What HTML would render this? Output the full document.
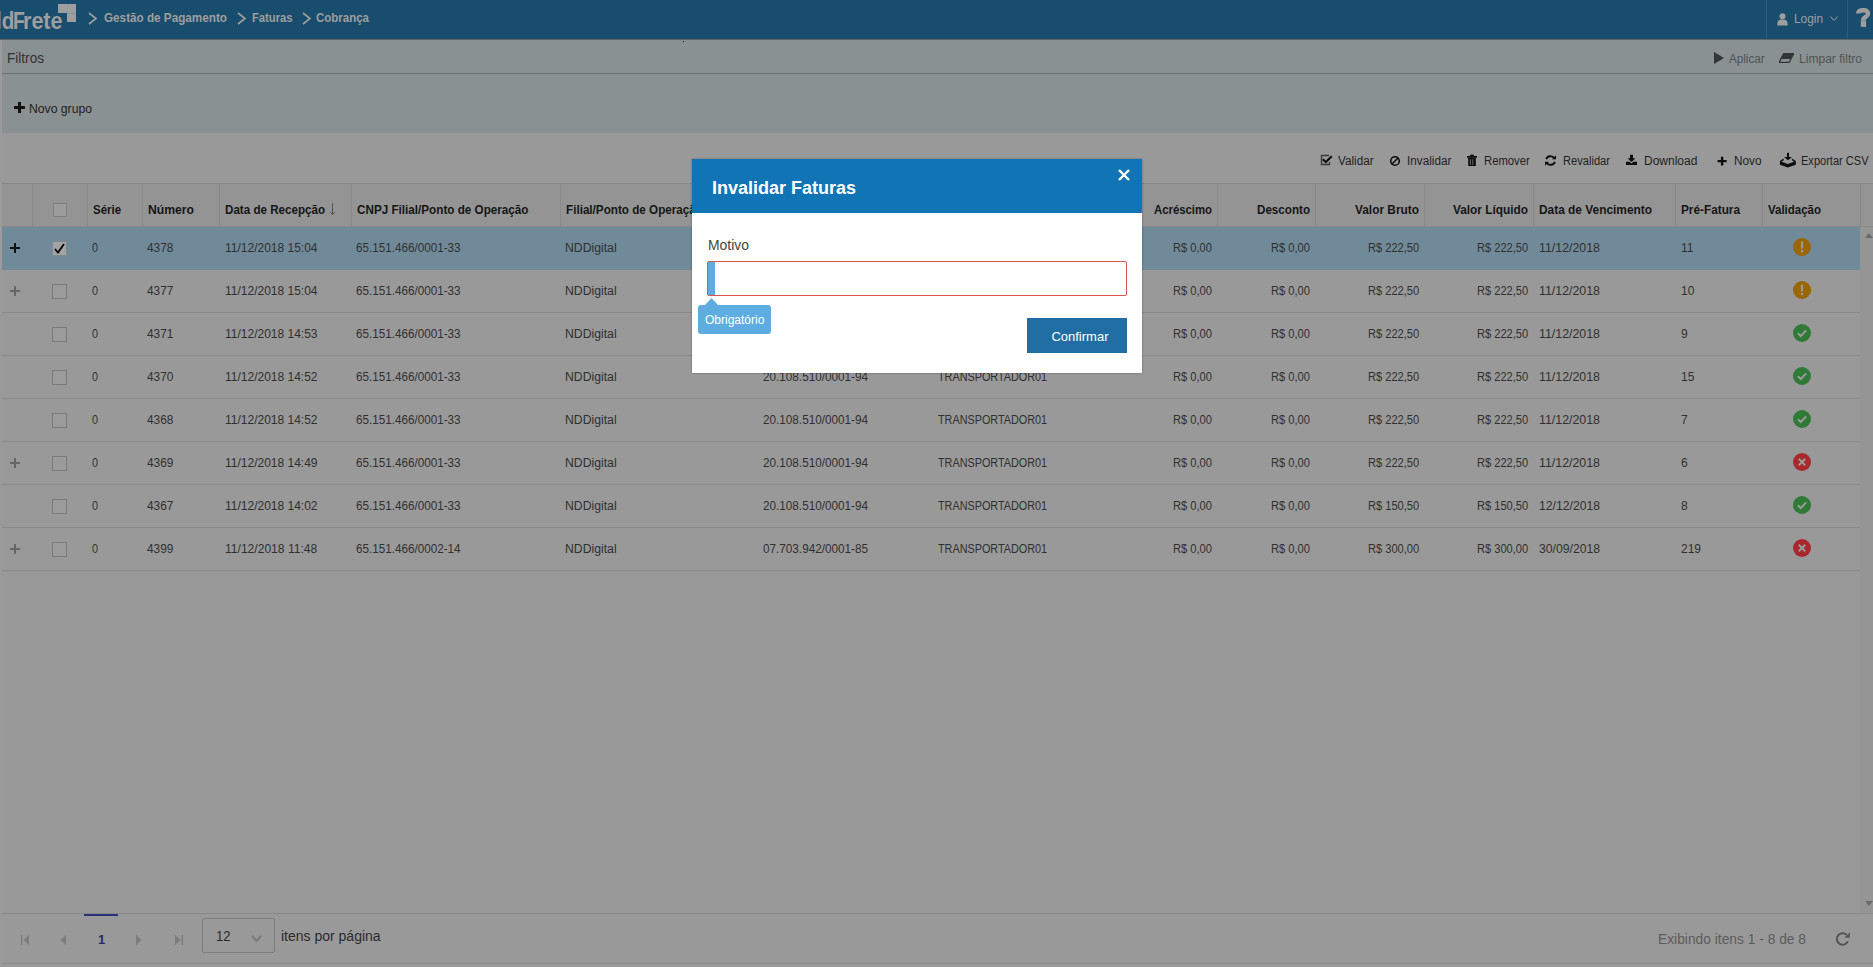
<!DOCTYPE html>
<html><head><meta charset="utf-8"><title>Invalidar Faturas</title>
<style>
html,body{margin:0;padding:0;}
body{width:1873px;height:967px;overflow:hidden;position:relative;background:#999999;font-family:"Liberation Sans", sans-serif;}
.r{position:absolute;}
.t{position:absolute;white-space:nowrap;transform-origin:0 50%;}
</style></head><body>
<div class="r" style="left:0px;top:39px;width:2px;height:928px;background:#9b9b9b;"></div>
<div class="r" style="left:0px;top:0px;width:1873px;height:39px;background:#194d6e;"></div>
<div class="r" style="left:0px;top:39px;width:1873px;height:1px;background:#5f6566;"></div>
<span class="t" style="left:-4.30px;top:5.03px;font-size:23px;line-height:32px;color:#9e9e9e;font-weight:bold;transform:scaleX(0.9002);">ld</span>
<span class="t" style="left:13.30px;top:5.03px;font-size:23px;line-height:32px;color:#9e9e9e;font-weight:bold;transform:scaleX(0.8399);">F</span>
<span class="t" style="left:23.20px;top:5.03px;font-size:23px;line-height:32px;color:#9e9e9e;font-weight:bold;transform:scaleX(0.9362);">rete</span>
<div class="r" style="left:58px;top:4px;width:18px;height:8.5px;background:#9e9e9e;"></div>
<div class="r" style="left:67px;top:4px;width:9px;height:18px;background:#9e9e9e;"></div>
<div class="r" style="left:67px;top:4px;width:1px;height:8.5px;background:#939a9d;"></div>
<div class="r" style="left:67px;top:12.5px;width:9px;height:1px;background:#88969d;"></div>
<svg class="r" style="left:88px;top:12px" width="9" height="13" viewBox="0 0 9 13"><polyline points="1,1 8,6.5 1,12" fill="none" stroke="#9e9e9e" stroke-width="1.6"/></svg>
<span class="t" style="left:104.00px;top:10.34px;font-size:12px;line-height:17px;color:#9e9e9e;font-weight:bold;transform:scaleX(0.9759);">Gestão de Pagamento</span>
<svg class="r" style="left:237px;top:12px" width="9" height="13" viewBox="0 0 9 13"><polyline points="1,1 8,6.5 1,12" fill="none" stroke="#9e9e9e" stroke-width="1.6"/></svg>
<span class="t" style="left:252.00px;top:10.34px;font-size:12px;line-height:17px;color:#9e9e9e;font-weight:bold;transform:scaleX(0.9343);">Faturas</span>
<svg class="r" style="left:302px;top:12px" width="9" height="13" viewBox="0 0 9 13"><polyline points="1,1 8,6.5 1,12" fill="none" stroke="#9e9e9e" stroke-width="1.6"/></svg>
<span class="t" style="left:316.00px;top:10.34px;font-size:12px;line-height:17px;color:#9e9e9e;font-weight:bold;transform:scaleX(0.9576);">Cobrança</span>
<div class="r" style="left:1766px;top:0px;width:1px;height:39px;background:#2c5c7b;"></div>
<div class="r" style="left:1847px;top:0px;width:1px;height:39px;background:#2c5c7b;"></div>
<svg class="r" style="left:1777px;top:13px" width="11" height="13" viewBox="0 0 11 13"><circle cx="5.5" cy="3.2" r="3" fill="#9e9e9e"/><path d="M0.3 12.5 C0.3 7 2 6.5 5.5 6.5 C9 6.5 10.7 7 10.7 12.5 Z" fill="#9e9e9e"/></svg>
<span class="t" style="left:1794.00px;top:11.34px;font-size:12px;line-height:17px;color:#9e9e9e;transform:scaleX(0.9877);">Login</span>
<svg class="r" style="left:1830px;top:16px" width="8" height="6" viewBox="0 0 8 6"><polyline points="0.5,0.5 4,4.5 7.5,0.5" fill="none" stroke="#9e9e9e" stroke-width="1"/></svg>
<svg class="r" style="left:1853px;top:5px" width="20" height="24" viewBox="0 0 20 24"><path d="M5.2 8.6 C5.2 6 7.6 5.3 10.2 5.3 C13 5.3 15 6.4 15 8.7 C15 11.2 12.2 11.6 10.45 13.9 L10.45 15.6" fill="none" stroke="#9e9e9e" stroke-width="4.4"/><rect x="7.8" y="15.3" width="5.3" height="6.6" fill="#9e9e9e"/><rect x="7.8" y="16.2" width="5.3" height="0.8" fill="#8b9598"/></svg>
<div class="r" style="left:2px;top:40px;width:1871px;height:93px;background:#8a9192;"></div>
<div class="r" style="left:683px;top:41px;width:1px;height:1px;background:#111;"></div>
<div class="r" style="left:2px;top:73px;width:1871px;height:1px;background:#6b7172;"></div>
<span class="t" style="left:7.00px;top:48.15px;font-size:14px;line-height:20px;color:#2e3232;transform:scaleX(0.9709);">Filtros</span>
<svg class="r" style="left:14px;top:102px" width="11" height="11" viewBox="0 0 11 11"><path d="M4 0h3v4h4v3h-4v4h-3v-4h-4v-3h4z" fill="#111"/></svg>
<span class="t" style="left:29.00px;top:101.34px;font-size:12px;line-height:17px;color:#1e2020;transform:scaleX(1.0155);">Novo grupo</span>
<svg class="r" style="left:1714px;top:52px" width="10" height="12" viewBox="0 0 10 12"><path d="M0 0 L10 6 L0 12 Z" fill="#333637"/></svg>
<span class="t" style="left:1729.00px;top:51.34px;font-size:12px;line-height:17px;color:#4e5454;transform:scaleX(0.9706);">Aplicar</span>
<svg class="r" style="left:1779px;top:53px" width="15" height="10" viewBox="0 0 15 10"><path d="M5 0 H15 L10 9.5 H0 Z" fill="none" stroke="#333637" stroke-width="1.3"/><path d="M5 0 H15 L11.5 6 H1.8 Z" fill="#333637"/></svg>
<span class="t" style="left:1798.60px;top:51.34px;font-size:12px;line-height:17px;color:#4e5454;transform:scaleX(1.0050);">Limpar filtro</span>
<svg class="r" style="left:1320px;top:154px" width="14" height="12" viewBox="0 0 14 12"><path d="M9 1.5 H1.5 V10.5 H9.5 V8" fill="none" stroke="#3a3a3a" stroke-width="1.4"/><path d="M2.8 5.2 L5.8 8 L11.8 2.3" fill="none" stroke="#0d0d0d" stroke-width="2.1"/></svg>
<svg class="r" style="left:1389px;top:155px" width="12" height="12" viewBox="0 0 12 12"><circle cx="6" cy="6" r="4.3" fill="none" stroke="#0d0d0d" stroke-width="1.6"/><path d="M9.2 2.8 L2.8 9.2" stroke="#0d0d0d" stroke-width="1.6"/></svg>
<svg class="r" style="left:1466px;top:154px" width="12" height="13" viewBox="0 0 12 13"><rect x="1" y="2" width="10" height="1.8" fill="#0d0d0d"/><rect x="4.2" y="0.6" width="3.6" height="1.6" fill="#0d0d0d"/><path d="M2.2 4 H9.8 V12 H2.2 Z" fill="#0d0d0d"/><rect x="3.9" y="5.2" width="1" height="5.6" fill="#6b6b6b"/><rect x="6.3" y="5.2" width="1" height="5.6" fill="#6b6b6b"/></svg>
<svg class="r" style="left:1544px;top:154px" width="13" height="13" viewBox="0 0 13 13"><path d="M10.3 4.3 A4.6 4.6 0 0 0 2.1 5.2" fill="none" stroke="#0d0d0d" stroke-width="1.9"/><path d="M8 5.3 L12 5.3 L12 1.3 Z" fill="#0d0d0d"/><path d="M2.7 8.7 A4.6 4.6 0 0 0 10.9 7.8" fill="none" stroke="#0d0d0d" stroke-width="1.9"/><path d="M5 7.7 L1 7.7 L1 11.7 Z" fill="#0d0d0d"/></svg>
<svg class="r" style="left:1625px;top:154px" width="13" height="12" viewBox="0 0 13 12"><rect x="5" y="0.8" width="3" height="4" fill="#0d0d0d"/><path d="M2.6 4.2 H10.4 L6.5 8 Z" fill="#0d0d0d"/><path d="M1 7.8 H4.6 L6.5 9.6 L8.4 7.8 H12 V11 H1 Z" fill="#0d0d0d"/></svg>
<svg class="r" style="left:1717px;top:156px" width="11" height="10" viewBox="0 0 11 10"><path d="M3.9 0.8 H6.3 V3.9 H9.6 V6.3 H6.3 V9.4 H3.9 V6.3 H0.6 V3.9 H3.9 Z" fill="#0d0d0d"/></svg>
<svg class="r" style="left:1779px;top:152px" width="18" height="17" viewBox="0 0 18 17"><rect x="8" y="0.8" width="2" height="4.6" fill="#0d0d0d"/><path d="M5 5 H13 L9 8.3 Z" fill="#0d0d0d"/><path d="M1.3 9.6 L4.6 7.4 M16.3 9.6 L13 7.4" stroke="#0d0d0d" stroke-width="1.6"/><path d="M0.9 9 L8.8 11.9 L16.8 9 V12.8 L8.8 15.4 L0.9 12.8 Z" fill="#0d0d0d"/></svg>
<span class="t" style="left:1338.00px;top:153.34px;font-size:12px;line-height:17px;color:#1f1f1f;transform:scaleX(0.9763);">Validar</span>
<span class="t" style="left:1407.00px;top:153.34px;font-size:12px;line-height:17px;color:#1f1f1f;transform:scaleX(0.9789);">Invalidar</span>
<span class="t" style="left:1484.00px;top:153.34px;font-size:12px;line-height:17px;color:#1f1f1f;transform:scaleX(0.9408);">Remover</span>
<span class="t" style="left:1563.00px;top:153.34px;font-size:12px;line-height:17px;color:#1f1f1f;transform:scaleX(0.9272);">Revalidar</span>
<span class="t" style="left:1644.00px;top:153.34px;font-size:12px;line-height:17px;color:#1f1f1f;">Download</span>
<span class="t" style="left:1734.00px;top:153.34px;font-size:12px;line-height:17px;color:#1f1f1f;transform:scaleX(0.9817);">Novo</span>
<span class="t" style="left:1801.00px;top:153.34px;font-size:12px;line-height:17px;color:#1f1f1f;transform:scaleX(0.9201);">Exportar CSV</span>
<div class="r" style="left:2px;top:183px;width:1871px;height:1px;background:#868686;"></div>
<div class="r" style="left:2px;top:184px;width:1871px;height:42px;background:#949494;"></div>
<div class="r" style="left:2px;top:226px;width:1871px;height:1px;background:#888888;"></div>
<div class="r" style="left:32px;top:184px;width:1px;height:42px;background:#898989;"></div>
<div class="r" style="left:87px;top:184px;width:1px;height:42px;background:#898989;"></div>
<div class="r" style="left:142px;top:184px;width:1px;height:42px;background:#898989;"></div>
<div class="r" style="left:219px;top:184px;width:1px;height:42px;background:#898989;"></div>
<div class="r" style="left:351px;top:184px;width:1px;height:42px;background:#898989;"></div>
<div class="r" style="left:560px;top:184px;width:1px;height:42px;background:#898989;"></div>
<div class="r" style="left:757px;top:184px;width:1px;height:42px;background:#898989;"></div>
<div class="r" style="left:932px;top:184px;width:1px;height:42px;background:#898989;"></div>
<div class="r" style="left:1140px;top:184px;width:1px;height:42px;background:#898989;"></div>
<div class="r" style="left:1217px;top:184px;width:1px;height:42px;background:#898989;"></div>
<div class="r" style="left:1315px;top:184px;width:1px;height:42px;background:#898989;"></div>
<div class="r" style="left:1424px;top:184px;width:1px;height:42px;background:#898989;"></div>
<div class="r" style="left:1533px;top:184px;width:1px;height:42px;background:#898989;"></div>
<div class="r" style="left:1675px;top:184px;width:1px;height:42px;background:#898989;"></div>
<div class="r" style="left:1762px;top:184px;width:1px;height:42px;background:#898989;"></div>
<div class="r" style="left:1860px;top:184px;width:1px;height:42px;background:#898989;"></div>
<div class="r" style="left:53px;top:203px;width:14px;height:14px;background:#9c9c9c;box-sizing:border-box;border:1px solid #7e7e7e;"></div>
<span class="t" style="left:93.00px;top:202.34px;font-size:12px;line-height:17px;color:#161616;font-weight:bold;transform:scaleX(0.9538);">Série</span>
<span class="t" style="left:148.00px;top:202.34px;font-size:12px;line-height:17px;color:#161616;font-weight:bold;transform:scaleX(1.0146);">Número</span>
<span class="t" style="left:225.00px;top:202.34px;font-size:12px;line-height:17px;color:#161616;font-weight:bold;transform:scaleX(0.9673);">Data de Recepção</span>
<svg class="r" style="left:329px;top:202px" width="8" height="14" viewBox="0 0 8 14"><path d="M3.5 1 V12.6 M1 9.8 L3.5 12.6 L6 9.8" fill="none" stroke="#555" stroke-width="1"/></svg>
<span class="t" style="left:357.00px;top:202.34px;font-size:12px;line-height:17px;color:#161616;font-weight:bold;transform:scaleX(0.9742);">CNPJ Filial/Ponto de Operação</span>
<span class="t" style="left:566.00px;top:202.34px;font-size:12px;line-height:17px;color:#161616;font-weight:bold;transform:scaleX(0.9737);">Filial/Ponto de Operação</span>
<span class="t" style="left:763.00px;top:202.34px;font-size:12px;line-height:17px;color:#161616;font-weight:bold;">CNPJ Transportadora</span>
<span class="t" style="left:938.00px;top:202.34px;font-size:12px;line-height:17px;color:#161616;font-weight:bold;">Transportadora</span>
<span class="t" style="left:1154.00px;top:202.34px;font-size:12px;line-height:17px;color:#161616;font-weight:bold;transform:scaleX(0.9452);">Acréscimo</span>
<span class="t" style="left:1257.00px;top:202.34px;font-size:12px;line-height:17px;color:#161616;font-weight:bold;transform:scaleX(0.9694);">Desconto</span>
<span class="t" style="left:1355.00px;top:202.34px;font-size:12px;line-height:17px;color:#161616;font-weight:bold;transform:scaleX(0.9896);">Valor Bruto</span>
<span class="t" style="left:1453.00px;top:202.34px;font-size:12px;line-height:17px;color:#161616;font-weight:bold;transform:scaleX(0.9868);">Valor Líquido</span>
<span class="t" style="left:1539.00px;top:202.34px;font-size:12px;line-height:17px;color:#161616;font-weight:bold;transform:scaleX(0.9909);">Data de Vencimento</span>
<span class="t" style="left:1681.00px;top:202.34px;font-size:12px;line-height:17px;color:#161616;font-weight:bold;transform:scaleX(0.9830);">Pré-Fatura</span>
<span class="t" style="left:1768.00px;top:202.34px;font-size:12px;line-height:17px;color:#161616;font-weight:bold;transform:scaleX(0.9573);">Validação</span>
<div class="r" style="left:1860px;top:227px;width:13px;height:686px;background:#959595;"></div>
<svg class="r" style="left:1865px;top:233px" width="8" height="5" viewBox="0 0 8 5"><path d="M0 5 L4 0 L8 5Z" fill="#6a6a6a"/></svg>
<svg class="r" style="left:1865px;top:901px" width="8" height="5" viewBox="0 0 8 5"><path d="M0 0 L4 5 L8 0Z" fill="#6a6a6a"/></svg>
<div class="r" style="left:2px;top:227px;width:1858px;height:43px;background:#708a99;"></div>
<svg class="r" style="left:10px;top:243.3px" width="10" height="10" viewBox="0 0 10 10"><path d="M4 0h2v4h4v2h-4v4h-2v-4h-4v-2h4z" fill="#111"/></svg>
<div class="r" style="left:52px;top:241px;width:15px;height:15px;background:#a3a3a3;box-sizing:border-box;border:1px solid #7e8a90;"></div>
<svg class="r" style="left:54px;top:243px" width="11" height="11" viewBox="0 0 11 11"><path d="M1 6 L4 9.5 L10 1" fill="none" stroke="#000" stroke-width="1.8"/></svg>
<span class="t" style="left:92.00px;top:240.34px;font-size:12px;line-height:17px;color:#303030;transform:scaleX(0.8990);">0</span>
<span class="t" style="left:147.00px;top:240.34px;font-size:12px;line-height:17px;color:#303030;transform:scaleX(0.9889);">4378</span>
<span class="t" style="left:225.00px;top:240.34px;font-size:12px;line-height:17px;color:#303030;">11/12/2018 15:04</span>
<span class="t" style="left:356.00px;top:240.34px;font-size:12px;line-height:17px;color:#303030;transform:scaleX(0.9736);">65.151.466/0001-33</span>
<span class="t" style="left:565.00px;top:240.34px;font-size:12px;line-height:17px;color:#303030;transform:scaleX(1.0182);">NDDigital</span>
<span class="t" style="left:763.00px;top:240.34px;font-size:12px;line-height:17px;color:#303030;transform:scaleX(0.9774);">20.108.510/0001-94</span>
<span class="t" style="left:938.00px;top:240.34px;font-size:12px;line-height:17px;color:#303030;transform:scaleX(0.9015);">TRANSPORTADOR01</span>
<span class="t" style="left:1173.00px;top:240.34px;font-size:12px;line-height:17px;color:#303030;transform:scaleX(0.9279);">R$ 0,00</span>
<span class="t" style="left:1271.00px;top:240.34px;font-size:12px;line-height:17px;color:#303030;transform:scaleX(0.9279);">R$ 0,00</span>
<span class="t" style="left:1367.80px;top:240.34px;font-size:12px;line-height:17px;color:#303030;transform:scaleX(0.9246);">R$ 222,50</span>
<span class="t" style="left:1476.80px;top:240.34px;font-size:12px;line-height:17px;color:#303030;transform:scaleX(0.9246);">R$ 222,50</span>
<span class="t" style="left:1539.00px;top:240.34px;font-size:12px;line-height:17px;color:#303030;transform:scaleX(1.0310);">11/12/2018</span>
<span class="t" style="left:1681.00px;top:240.34px;font-size:12px;line-height:17px;color:#303030;">11</span>
<svg class="r" style="left:1793px;top:238px" width="18" height="18" viewBox="0 0 18 18"><circle cx="9" cy="9" r="9" fill="#9a6600"/><rect x="7.9" y="3.5" width="2.2" height="7" fill="#999"/><rect x="7.9" y="12" width="2.2" height="2.3" fill="#999"/></svg>
<div class="r" style="left:2px;top:312px;width:1858px;height:1px;background:#8a8a8a;"></div>
<svg class="r" style="left:10px;top:286.3px" width="10" height="10" viewBox="0 0 10 10"><path d="M4 0h2v4h4v2h-4v4h-2v-4h-4v-2h4z" fill="#666666"/></svg>
<div class="r" style="left:52px;top:284px;width:15px;height:15px;background:#9b9b9b;box-sizing:border-box;border:1px solid #7a7a7a;"></div>
<span class="t" style="left:92.00px;top:283.34px;font-size:12px;line-height:17px;color:#303030;transform:scaleX(0.8990);">0</span>
<span class="t" style="left:147.00px;top:283.34px;font-size:12px;line-height:17px;color:#303030;transform:scaleX(0.9889);">4377</span>
<span class="t" style="left:225.00px;top:283.34px;font-size:12px;line-height:17px;color:#303030;">11/12/2018 15:04</span>
<span class="t" style="left:356.00px;top:283.34px;font-size:12px;line-height:17px;color:#303030;transform:scaleX(0.9736);">65.151.466/0001-33</span>
<span class="t" style="left:565.00px;top:283.34px;font-size:12px;line-height:17px;color:#303030;transform:scaleX(1.0182);">NDDigital</span>
<span class="t" style="left:763.00px;top:283.34px;font-size:12px;line-height:17px;color:#303030;transform:scaleX(0.9774);">20.108.510/0001-94</span>
<span class="t" style="left:938.00px;top:283.34px;font-size:12px;line-height:17px;color:#303030;transform:scaleX(0.9015);">TRANSPORTADOR01</span>
<span class="t" style="left:1173.00px;top:283.34px;font-size:12px;line-height:17px;color:#303030;transform:scaleX(0.9279);">R$ 0,00</span>
<span class="t" style="left:1271.00px;top:283.34px;font-size:12px;line-height:17px;color:#303030;transform:scaleX(0.9279);">R$ 0,00</span>
<span class="t" style="left:1367.80px;top:283.34px;font-size:12px;line-height:17px;color:#303030;transform:scaleX(0.9246);">R$ 222,50</span>
<span class="t" style="left:1476.80px;top:283.34px;font-size:12px;line-height:17px;color:#303030;transform:scaleX(0.9246);">R$ 222,50</span>
<span class="t" style="left:1539.00px;top:283.34px;font-size:12px;line-height:17px;color:#303030;transform:scaleX(1.0310);">11/12/2018</span>
<span class="t" style="left:1681.00px;top:283.34px;font-size:12px;line-height:17px;color:#303030;">10</span>
<svg class="r" style="left:1793px;top:281px" width="18" height="18" viewBox="0 0 18 18"><circle cx="9" cy="9" r="9" fill="#9a6600"/><rect x="7.9" y="3.5" width="2.2" height="7" fill="#999"/><rect x="7.9" y="12" width="2.2" height="2.3" fill="#999"/></svg>
<div class="r" style="left:2px;top:355px;width:1858px;height:1px;background:#8a8a8a;"></div>
<div class="r" style="left:52px;top:327px;width:15px;height:15px;background:#9b9b9b;box-sizing:border-box;border:1px solid #7a7a7a;"></div>
<span class="t" style="left:92.00px;top:326.34px;font-size:12px;line-height:17px;color:#303030;transform:scaleX(0.8990);">0</span>
<span class="t" style="left:147.00px;top:326.34px;font-size:12px;line-height:17px;color:#303030;transform:scaleX(0.9889);">4371</span>
<span class="t" style="left:225.00px;top:326.34px;font-size:12px;line-height:17px;color:#303030;">11/12/2018 14:53</span>
<span class="t" style="left:356.00px;top:326.34px;font-size:12px;line-height:17px;color:#303030;transform:scaleX(0.9736);">65.151.466/0001-33</span>
<span class="t" style="left:565.00px;top:326.34px;font-size:12px;line-height:17px;color:#303030;transform:scaleX(1.0182);">NDDigital</span>
<span class="t" style="left:763.00px;top:326.34px;font-size:12px;line-height:17px;color:#303030;transform:scaleX(0.9774);">20.108.510/0001-94</span>
<span class="t" style="left:938.00px;top:326.34px;font-size:12px;line-height:17px;color:#303030;transform:scaleX(0.9015);">TRANSPORTADOR01</span>
<span class="t" style="left:1173.00px;top:326.34px;font-size:12px;line-height:17px;color:#303030;transform:scaleX(0.9279);">R$ 0,00</span>
<span class="t" style="left:1271.00px;top:326.34px;font-size:12px;line-height:17px;color:#303030;transform:scaleX(0.9279);">R$ 0,00</span>
<span class="t" style="left:1367.80px;top:326.34px;font-size:12px;line-height:17px;color:#303030;transform:scaleX(0.9246);">R$ 222,50</span>
<span class="t" style="left:1476.80px;top:326.34px;font-size:12px;line-height:17px;color:#303030;transform:scaleX(0.9246);">R$ 222,50</span>
<span class="t" style="left:1539.00px;top:326.34px;font-size:12px;line-height:17px;color:#303030;transform:scaleX(1.0310);">11/12/2018</span>
<span class="t" style="left:1681.00px;top:326.34px;font-size:12px;line-height:17px;color:#303030;">9</span>
<svg class="r" style="left:1793px;top:324px" width="18" height="18" viewBox="0 0 18 18"><circle cx="9" cy="9" r="9" fill="#2e7a36"/><path d="M4.8 9.2 L7.8 12 L13.2 6.4" fill="none" stroke="#9a9a9a" stroke-width="2"/></svg>
<div class="r" style="left:2px;top:398px;width:1858px;height:1px;background:#8a8a8a;"></div>
<div class="r" style="left:52px;top:370px;width:15px;height:15px;background:#9b9b9b;box-sizing:border-box;border:1px solid #7a7a7a;"></div>
<span class="t" style="left:92.00px;top:369.34px;font-size:12px;line-height:17px;color:#303030;transform:scaleX(0.8990);">0</span>
<span class="t" style="left:147.00px;top:369.34px;font-size:12px;line-height:17px;color:#303030;transform:scaleX(0.9889);">4370</span>
<span class="t" style="left:225.00px;top:369.34px;font-size:12px;line-height:17px;color:#303030;">11/12/2018 14:52</span>
<span class="t" style="left:356.00px;top:369.34px;font-size:12px;line-height:17px;color:#303030;transform:scaleX(0.9736);">65.151.466/0001-33</span>
<span class="t" style="left:565.00px;top:369.34px;font-size:12px;line-height:17px;color:#303030;transform:scaleX(1.0182);">NDDigital</span>
<span class="t" style="left:763.00px;top:369.34px;font-size:12px;line-height:17px;color:#303030;transform:scaleX(0.9774);">20.108.510/0001-94</span>
<span class="t" style="left:938.00px;top:369.34px;font-size:12px;line-height:17px;color:#303030;transform:scaleX(0.9015);">TRANSPORTADOR01</span>
<span class="t" style="left:1173.00px;top:369.34px;font-size:12px;line-height:17px;color:#303030;transform:scaleX(0.9279);">R$ 0,00</span>
<span class="t" style="left:1271.00px;top:369.34px;font-size:12px;line-height:17px;color:#303030;transform:scaleX(0.9279);">R$ 0,00</span>
<span class="t" style="left:1367.80px;top:369.34px;font-size:12px;line-height:17px;color:#303030;transform:scaleX(0.9246);">R$ 222,50</span>
<span class="t" style="left:1476.80px;top:369.34px;font-size:12px;line-height:17px;color:#303030;transform:scaleX(0.9246);">R$ 222,50</span>
<span class="t" style="left:1539.00px;top:369.34px;font-size:12px;line-height:17px;color:#303030;transform:scaleX(1.0310);">11/12/2018</span>
<span class="t" style="left:1681.00px;top:369.34px;font-size:12px;line-height:17px;color:#303030;">15</span>
<svg class="r" style="left:1793px;top:367px" width="18" height="18" viewBox="0 0 18 18"><circle cx="9" cy="9" r="9" fill="#2e7a36"/><path d="M4.8 9.2 L7.8 12 L13.2 6.4" fill="none" stroke="#9a9a9a" stroke-width="2"/></svg>
<div class="r" style="left:2px;top:441px;width:1858px;height:1px;background:#8a8a8a;"></div>
<div class="r" style="left:52px;top:413px;width:15px;height:15px;background:#9b9b9b;box-sizing:border-box;border:1px solid #7a7a7a;"></div>
<span class="t" style="left:92.00px;top:412.34px;font-size:12px;line-height:17px;color:#303030;transform:scaleX(0.8990);">0</span>
<span class="t" style="left:147.00px;top:412.34px;font-size:12px;line-height:17px;color:#303030;transform:scaleX(0.9889);">4368</span>
<span class="t" style="left:225.00px;top:412.34px;font-size:12px;line-height:17px;color:#303030;">11/12/2018 14:52</span>
<span class="t" style="left:356.00px;top:412.34px;font-size:12px;line-height:17px;color:#303030;transform:scaleX(0.9736);">65.151.466/0001-33</span>
<span class="t" style="left:565.00px;top:412.34px;font-size:12px;line-height:17px;color:#303030;transform:scaleX(1.0182);">NDDigital</span>
<span class="t" style="left:763.00px;top:412.34px;font-size:12px;line-height:17px;color:#303030;transform:scaleX(0.9774);">20.108.510/0001-94</span>
<span class="t" style="left:938.00px;top:412.34px;font-size:12px;line-height:17px;color:#303030;transform:scaleX(0.9015);">TRANSPORTADOR01</span>
<span class="t" style="left:1173.00px;top:412.34px;font-size:12px;line-height:17px;color:#303030;transform:scaleX(0.9279);">R$ 0,00</span>
<span class="t" style="left:1271.00px;top:412.34px;font-size:12px;line-height:17px;color:#303030;transform:scaleX(0.9279);">R$ 0,00</span>
<span class="t" style="left:1367.80px;top:412.34px;font-size:12px;line-height:17px;color:#303030;transform:scaleX(0.9246);">R$ 222,50</span>
<span class="t" style="left:1476.80px;top:412.34px;font-size:12px;line-height:17px;color:#303030;transform:scaleX(0.9246);">R$ 222,50</span>
<span class="t" style="left:1539.00px;top:412.34px;font-size:12px;line-height:17px;color:#303030;transform:scaleX(1.0310);">11/12/2018</span>
<span class="t" style="left:1681.00px;top:412.34px;font-size:12px;line-height:17px;color:#303030;">7</span>
<svg class="r" style="left:1793px;top:410px" width="18" height="18" viewBox="0 0 18 18"><circle cx="9" cy="9" r="9" fill="#2e7a36"/><path d="M4.8 9.2 L7.8 12 L13.2 6.4" fill="none" stroke="#9a9a9a" stroke-width="2"/></svg>
<div class="r" style="left:2px;top:484px;width:1858px;height:1px;background:#8a8a8a;"></div>
<svg class="r" style="left:10px;top:458.3px" width="10" height="10" viewBox="0 0 10 10"><path d="M4 0h2v4h4v2h-4v4h-2v-4h-4v-2h4z" fill="#666666"/></svg>
<div class="r" style="left:52px;top:456px;width:15px;height:15px;background:#9b9b9b;box-sizing:border-box;border:1px solid #7a7a7a;"></div>
<span class="t" style="left:92.00px;top:455.34px;font-size:12px;line-height:17px;color:#303030;transform:scaleX(0.8990);">0</span>
<span class="t" style="left:147.00px;top:455.34px;font-size:12px;line-height:17px;color:#303030;transform:scaleX(0.9889);">4369</span>
<span class="t" style="left:225.00px;top:455.34px;font-size:12px;line-height:17px;color:#303030;">11/12/2018 14:49</span>
<span class="t" style="left:356.00px;top:455.34px;font-size:12px;line-height:17px;color:#303030;transform:scaleX(0.9736);">65.151.466/0001-33</span>
<span class="t" style="left:565.00px;top:455.34px;font-size:12px;line-height:17px;color:#303030;transform:scaleX(1.0182);">NDDigital</span>
<span class="t" style="left:763.00px;top:455.34px;font-size:12px;line-height:17px;color:#303030;transform:scaleX(0.9774);">20.108.510/0001-94</span>
<span class="t" style="left:938.00px;top:455.34px;font-size:12px;line-height:17px;color:#303030;transform:scaleX(0.9015);">TRANSPORTADOR01</span>
<span class="t" style="left:1173.00px;top:455.34px;font-size:12px;line-height:17px;color:#303030;transform:scaleX(0.9279);">R$ 0,00</span>
<span class="t" style="left:1271.00px;top:455.34px;font-size:12px;line-height:17px;color:#303030;transform:scaleX(0.9279);">R$ 0,00</span>
<span class="t" style="left:1367.80px;top:455.34px;font-size:12px;line-height:17px;color:#303030;transform:scaleX(0.9246);">R$ 222,50</span>
<span class="t" style="left:1476.80px;top:455.34px;font-size:12px;line-height:17px;color:#303030;transform:scaleX(0.9246);">R$ 222,50</span>
<span class="t" style="left:1539.00px;top:455.34px;font-size:12px;line-height:17px;color:#303030;transform:scaleX(1.0310);">11/12/2018</span>
<span class="t" style="left:1681.00px;top:455.34px;font-size:12px;line-height:17px;color:#303030;">6</span>
<svg class="r" style="left:1793px;top:453px" width="18" height="18" viewBox="0 0 18 18"><circle cx="9" cy="9" r="9" fill="#a8282b"/><path d="M5.8 5.8 L12.2 12.2 M12.2 5.8 L5.8 12.2" fill="none" stroke="#9a9a9a" stroke-width="2"/></svg>
<div class="r" style="left:2px;top:527px;width:1858px;height:1px;background:#8a8a8a;"></div>
<div class="r" style="left:52px;top:499px;width:15px;height:15px;background:#9b9b9b;box-sizing:border-box;border:1px solid #7a7a7a;"></div>
<span class="t" style="left:92.00px;top:498.34px;font-size:12px;line-height:17px;color:#303030;transform:scaleX(0.8990);">0</span>
<span class="t" style="left:147.00px;top:498.34px;font-size:12px;line-height:17px;color:#303030;transform:scaleX(0.9889);">4367</span>
<span class="t" style="left:225.00px;top:498.34px;font-size:12px;line-height:17px;color:#303030;">11/12/2018 14:02</span>
<span class="t" style="left:356.00px;top:498.34px;font-size:12px;line-height:17px;color:#303030;transform:scaleX(0.9736);">65.151.466/0001-33</span>
<span class="t" style="left:565.00px;top:498.34px;font-size:12px;line-height:17px;color:#303030;transform:scaleX(1.0182);">NDDigital</span>
<span class="t" style="left:763.00px;top:498.34px;font-size:12px;line-height:17px;color:#303030;transform:scaleX(0.9774);">20.108.510/0001-94</span>
<span class="t" style="left:938.00px;top:498.34px;font-size:12px;line-height:17px;color:#303030;transform:scaleX(0.9015);">TRANSPORTADOR01</span>
<span class="t" style="left:1173.00px;top:498.34px;font-size:12px;line-height:17px;color:#303030;transform:scaleX(0.9279);">R$ 0,00</span>
<span class="t" style="left:1271.00px;top:498.34px;font-size:12px;line-height:17px;color:#303030;transform:scaleX(0.9279);">R$ 0,00</span>
<span class="t" style="left:1367.80px;top:498.34px;font-size:12px;line-height:17px;color:#303030;transform:scaleX(0.9246);">R$ 150,50</span>
<span class="t" style="left:1476.80px;top:498.34px;font-size:12px;line-height:17px;color:#303030;transform:scaleX(0.9246);">R$ 150,50</span>
<span class="t" style="left:1539.00px;top:498.34px;font-size:12px;line-height:17px;color:#303030;transform:scaleX(1.0157);">12/12/2018</span>
<span class="t" style="left:1681.00px;top:498.34px;font-size:12px;line-height:17px;color:#303030;">8</span>
<svg class="r" style="left:1793px;top:496px" width="18" height="18" viewBox="0 0 18 18"><circle cx="9" cy="9" r="9" fill="#2e7a36"/><path d="M4.8 9.2 L7.8 12 L13.2 6.4" fill="none" stroke="#9a9a9a" stroke-width="2"/></svg>
<div class="r" style="left:2px;top:570px;width:1858px;height:1px;background:#8a8a8a;"></div>
<svg class="r" style="left:10px;top:544.3px" width="10" height="10" viewBox="0 0 10 10"><path d="M4 0h2v4h4v2h-4v4h-2v-4h-4v-2h4z" fill="#666666"/></svg>
<div class="r" style="left:52px;top:542px;width:15px;height:15px;background:#9b9b9b;box-sizing:border-box;border:1px solid #7a7a7a;"></div>
<span class="t" style="left:92.00px;top:541.34px;font-size:12px;line-height:17px;color:#303030;transform:scaleX(0.8990);">0</span>
<span class="t" style="left:147.00px;top:541.34px;font-size:12px;line-height:17px;color:#303030;transform:scaleX(0.9889);">4399</span>
<span class="t" style="left:225.00px;top:541.34px;font-size:12px;line-height:17px;color:#303030;transform:scaleX(1.0061);">11/12/2018 11:48</span>
<span class="t" style="left:356.00px;top:541.34px;font-size:12px;line-height:17px;color:#303030;transform:scaleX(0.9736);">65.151.466/0002-14</span>
<span class="t" style="left:565.00px;top:541.34px;font-size:12px;line-height:17px;color:#303030;transform:scaleX(1.0182);">NDDigital</span>
<span class="t" style="left:763.00px;top:541.34px;font-size:12px;line-height:17px;color:#303030;transform:scaleX(0.9774);">07.703.942/0001-85</span>
<span class="t" style="left:938.00px;top:541.34px;font-size:12px;line-height:17px;color:#303030;transform:scaleX(0.9015);">TRANSPORTADOR01</span>
<span class="t" style="left:1173.00px;top:541.34px;font-size:12px;line-height:17px;color:#303030;transform:scaleX(0.9279);">R$ 0,00</span>
<span class="t" style="left:1271.00px;top:541.34px;font-size:12px;line-height:17px;color:#303030;transform:scaleX(0.9279);">R$ 0,00</span>
<span class="t" style="left:1367.80px;top:541.34px;font-size:12px;line-height:17px;color:#303030;transform:scaleX(0.9246);">R$ 300,00</span>
<span class="t" style="left:1476.80px;top:541.34px;font-size:12px;line-height:17px;color:#303030;transform:scaleX(0.9246);">R$ 300,00</span>
<span class="t" style="left:1539.00px;top:541.34px;font-size:12px;line-height:17px;color:#303030;transform:scaleX(1.0157);">30/09/2018</span>
<span class="t" style="left:1681.00px;top:541.34px;font-size:12px;line-height:17px;color:#303030;">219</span>
<svg class="r" style="left:1793px;top:539px" width="18" height="18" viewBox="0 0 18 18"><circle cx="9" cy="9" r="9" fill="#a8282b"/><path d="M5.8 5.8 L12.2 12.2 M12.2 5.8 L5.8 12.2" fill="none" stroke="#9a9a9a" stroke-width="2"/></svg>
<div class="r" style="left:2px;top:913px;width:1871px;height:1px;background:#888888;"></div>
<div class="r" style="left:2px;top:963px;width:1871px;height:1px;background:#8a8a8a;"></div>
<div class="r" style="left:84px;top:914px;width:34px;height:2px;background:#26337c;"></div>
<span class="t" style="left:98.00px;top:930.50px;font-size:13px;line-height:18px;color:#232d6a;font-weight:bold;">1</span>
<svg class="r" style="left:21px;top:935px" width="8" height="10" viewBox="0 0 8 10"><rect x="0" y="0" width="1.3" height="10" fill="#7c7c7c"/><path d="M8 0 L2.5 5 L8 10Z" fill="#7c7c7c"/></svg>
<svg class="r" style="left:60px;top:935px" width="6" height="10" viewBox="0 0 6 10"><path d="M6 0 L0.5 5 L6 10Z" fill="#7c7c7c"/></svg>
<svg class="r" style="left:136px;top:935px" width="6" height="10" viewBox="0 0 6 10"><path d="M0 0 L5.5 5 L0 10Z" fill="#7c7c7c"/></svg>
<svg class="r" style="left:175px;top:935px" width="8" height="10" viewBox="0 0 8 10"><path d="M0 0 L5.5 5 L0 10Z" fill="#7c7c7c"/><rect x="6.7" y="0" width="1.3" height="10" fill="#7c7c7c"/></svg>
<div class="r" style="left:202px;top:918px;width:73px;height:35px;background:#999999;box-sizing:border-box;border:1px solid #7d7d7d;border-radius:2px;"></div>
<span class="t" style="left:216.00px;top:926.15px;font-size:14px;line-height:20px;color:#2b2b2b;transform:scaleX(0.9311);">12</span>
<svg class="r" style="left:251px;top:935px" width="11" height="7" viewBox="0 0 11 7"><polyline points="0.9,0.9 5.5,5.8 10.1,0.9" fill="none" stroke="#7a7a7a" stroke-width="2"/></svg>
<span class="t" style="left:281.00px;top:926.15px;font-size:14px;line-height:20px;color:#2b2b2b;">itens por página</span>
<span class="t" style="left:1658.00px;top:929.15px;font-size:14px;line-height:20px;color:#5c5c5c;transform:scaleX(0.9853);">Exibindo itens 1 - 8 de 8</span>
<svg class="r" style="left:1830px;top:926px" width="26" height="26" viewBox="0 0 26 26"><path d="M17.96 15.45 A5.8 5.8 0 1 1 16.8 8.9" fill="none" stroke="#555" stroke-width="2"/><path d="M19.8 6.2 L19.8 11.8 L14.4 11.8 Z" fill="#555"/></svg>
<div class="r" style="left:692px;top:159px;width:450px;height:214px;background:#fff;box-shadow:0 0 2px rgba(0,0,0,0.35);"></div>
<div class="r" style="left:692px;top:159px;width:450px;height:54px;background:#1174b5;"></div>
<span class="t" style="left:712.00px;top:176.26px;font-size:18px;line-height:25px;color:#ffffff;font-weight:bold;">Invalidar Faturas</span>
<svg class="r" style="left:1118px;top:169px" width="12" height="12" viewBox="0 0 12 12"><path d="M1 1 L11 11 M11 1 L1 11" stroke="#fff" stroke-width="2.4"/></svg>
<span class="t" style="left:707.60px;top:235.15px;font-size:14px;line-height:20px;color:#444444;transform:scaleX(0.9943);">Motivo</span>
<div class="r" style="left:707px;top:261px;width:420px;height:35px;background:#ffffff;box-sizing:border-box;border:1px solid #d9534f;border-radius:2px;"></div>
<div class="r" style="left:708px;top:262px;width:7px;height:33px;background:#5dade2;"></div>
<div class="r" style="left:698px;top:305px;width:73px;height:29px;background:#5dade2;border-radius:3px;"></div>
<svg class="r" style="left:704px;top:297px" width="16" height="9" viewBox="0 0 16 9"><path d="M0 9 L7.5 1 L15 9Z" fill="#5dade2"/></svg>
<span class="t" style="left:705.00px;top:312.34px;font-size:12px;line-height:17px;color:#ffffff;">Obrigatório</span>
<div class="r" style="left:1027px;top:318px;width:100px;height:35px;background:#206ea3;"></div>
<span class="t" style="left:1051.40px;top:327.50px;font-size:13px;line-height:18px;color:#ffffff;">Confirmar</span>
</body></html>
